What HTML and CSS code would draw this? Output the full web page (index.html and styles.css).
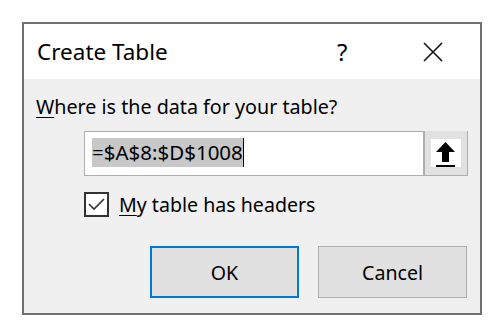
FILE: index.html
```html
<!doctype html>
<html>
<head>
<title>Create Table</title>
<link rel="stylesheet" href="styles.css">
</head>
<body>

<div class="dialog">
	<div class="titlebar">
		<div class="title">Create Table</div>
		<div class="help">?</div>
		<div class="close">
			<svg width="20" height="20" viewBox="0 0 20 20"><path d="M1 1 L19 19 M19 1 L1 19" stroke="#111" stroke-width="1.6" fill="none"/></svg>
		</div>
	</div>
	<div class="content">
		<div class="label"><u>W</u>here is the data for your table?</div>
		<div class="rangebox">
			<div class="rangetext"><span class="sel">=$A$8:$D$1008</span><span class="caret"></span></div>
			<div class="collapse">
				<div class="arrowbox">
					<svg width="30" height="28" viewBox="0 0 30 28"><path d="M14.5 3 L24 13 L18 13 L18 23 L11 23 L11 13 L5 13 Z" fill="#000"/><rect x="5" y="26" width="19" height="2" fill="#000"/></svg>
				</div>
			</div>
		</div>
		<div class="checkrow">
			<div class="checkbox">
				<svg width="21" height="21" viewBox="0 0 21 21"><path d="M3 10 L8 15 L18 5" stroke="#333" stroke-width="1.6" fill="none"/></svg>
			</div>
			<div class="checklabel"><u>M</u>y table has headers</div>
		</div>
		<div class="buttons">
			<div class="btn default">OK</div>
			<div class="btn">Cancel</div>
		</div>
	</div>
</div>

</body>
</html>
```
FILE: styles.css
```css
html,body {
	margin:0;
	background-color:#fff;
	color:#000;
	font-family:"Noto Sans","Open Sans",sans-serif;
}
.dialog {
	box-sizing:border-box;
	margin:22px 0 0 22px;
	width:460px;
	height:293px;
	border:2px solid #707070;
	background-color:#f0f0f0;
	display:flex;
	flex-direction:column;
}
.titlebar {
	height:55px;
	background-color:#fff;
	display:flex;
	align-items:center;
}
.title {
	font-size:22.5px;
	padding-left:13px;
	flex:1;
}
.help {
	font-size:24px;
	width:86px;
}
.close {
	width:20px;
	margin-right:37px;
	display:flex;
	align-items:center;
}
.content {
	flex:1;
	padding:12px 13px 0 12px;
}
.label {
	font-size:19.7px;
	line-height:26px;
	margin-top:3px;
}
.label u, .checklabel u {
	text-decoration-thickness:1px;
	text-underline-offset:3px;
}
.rangebox {
	box-sizing:border-box;
	margin:11px 0 0 48px;
	width:384px;
	height:45px;
	border:1px solid #adadad;
	background-color:#fff;
	display:flex;
}
.rangetext {
	flex:1;
	padding:6px 0 0 7px;
	display:flex;
	align-items:flex-start;
}
.sel {
	background-color:#c8c8c8;
	font-size:20.5px;
	line-height:29px;
}
.caret {
	width:1px;
	height:29px;
	background-color:#000;
}
.collapse {
	box-sizing:border-box;
	width:45px;
	border:2px solid #adadad;
	border-width:0 1px 1px 2px;
	background-color:#e1e1e1;
	display:flex;
	align-items:center;
	justify-content:center;
	margin:-1px -1px -1px 0;
}
.arrowbox {
	width:30px;
	height:28px;
	background-color:#fff;
	display:flex;
}
.checkrow {
	display:flex;
	align-items:center;
	margin:15px 0 0 48px;
}
.checkbox {
	box-sizing:border-box;
	width:25px;
	height:25px;
	border:2px solid #333;
	background-color:#fff;
	display:flex;
}
.checklabel {
	font-size:19.6px;
	margin-left:10px;
}
.buttons {
	display:flex;
	justify-content:flex-end;
	gap:19px;
	margin-top:28px;
}
.btn {
	box-sizing:border-box;
	width:149px;
	height:52px;
	border:1px solid #adadad;
	background-color:#e1e1e1;
	font-size:19.6px;
	display:flex;
	align-items:center;
	justify-content:center;
}
.btn.default {
	border:2px solid #0078d7;
}
```
